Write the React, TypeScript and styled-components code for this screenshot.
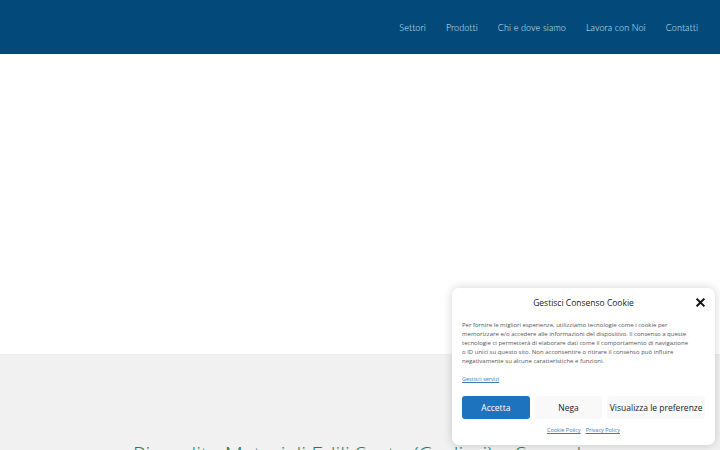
import React from 'react';
import styled, { createGlobalStyle } from 'styled-components';

const GlobalStyle = createGlobalStyle`
  html, body {
    margin: 0;
    padding: 0;
    background: #ffffff;
    font-family: 'Open Sans', 'Liberation Sans', sans-serif;
    overflow: hidden;
  }
`;

const Page = styled.div`
  width: 720px;
  height: 450px;
  position: relative;
  overflow: hidden;
`;

const Header = styled.header`
  height: 53px;
  background: #034a7b;
  border-bottom: 1px solid #0d4266;
  display: flex;
  align-items: center;
  justify-content: flex-end;
  padding-right: 22px;
`;

const Nav = styled.nav`
  display: flex;
  gap: 20px;
  padding-top: 1px;
`;

const NavLink = styled.a`
  color: #dde8f1;
  font-family: Lato, 'Open Sans', sans-serif;
  font-size: 9px;
  font-weight: 300;
  letter-spacing: 0.1px;
  text-decoration: none;
`;

const Hero = styled.section`
  height: 300px;
  background: #ffffff;
  border-bottom: 1px solid #ececec;
`;

const Intro = styled.section`
  background: #f1f1f1;
  padding-top: 85px;
  padding-left: 2px;
  height: 200px;
  text-align: center;
`;

const Title = styled.h1`
  margin: 0;
  font-weight: 300;
  font-size: 21px;
  color: #227b60;
`;

const Banner = styled.div`
  position: absolute;
  left: 452px;
  top: 288px;
  width: 263px;
  height: 157px;
  box-sizing: border-box;
  background: #ffffff;
  border-radius: 7px;
  box-shadow: 0 0 10px rgba(0, 0, 0, 0.18);
  padding: 8px 10px 0 10px;
  display: flex;
  flex-direction: column;
`;

const BannerHead = styled.div`
  display: flex;
  align-items: center;
  justify-content: center;
  position: relative;
  height: 12px;
`;

const BannerTitle = styled.div`
  font-size: 8.5px;
  color: #222;
`;

const Close = styled.span`
  position: absolute;
  right: 0;
  top: 0;
  display: flex;
  align-items: center;
  height: 12px;
`;

const Message = styled.div`
  margin-top: 13px;
  font-size: 6px;
  line-height: 9px;
  color: #555;
  span {
    display: block;
    white-space: nowrap;
  }
`;

const ManageLink = styled.a`
  margin-top: 9px;
  font-size: 5.5px;
  color: #3a7db3;
  text-decoration: underline;
`;

const Buttons = styled.div`
  display: flex;
  gap: 5px;
  margin-top: 13px;
`;

const Button = styled.button<{ $primary?: boolean; $w: number }>`
  width: ${(p) => p.$w}px;
  height: 23px;
  border: none;
  border-radius: 3px;
  font-family: inherit;
  font-size: 8.5px;
  padding: 0;
  background: ${(p) => (p.$primary ? '#1e73be' : '#f9f9f9')};
  color: ${(p) => (p.$primary ? '#ffffff' : '#222')};
`;

const Links = styled.div`
  display: flex;
  justify-content: center;
  gap: 5px;
  margin-top: 7px;
  a {
    font-size: 5.5px;
    color: #3a7db3;
    text-decoration: underline;
  }
`;

const App: React.FC = () => {
  const menu = ['Settori', 'Prodotti', 'Chi e dove siamo', 'Lavora con Noi', 'Contatti'];
  return (
    <Page>
      <GlobalStyle />
      <Header>
        <Nav>
          {menu.map((m) => (
            <NavLink key={m} href="#">
              {m}
            </NavLink>
          ))}
        </Nav>
      </Header>
      <Hero />
      <Intro>
        <Title>Rivendita Materiali Edili Sestu (Cagliari) e Sarroch</Title>
      </Intro>

      <Banner>
        <BannerHead>
          <BannerTitle>Gestisci Consenso Cookie</BannerTitle>
          <Close>
            <svg width="9" height="9" viewBox="0 0 10 10">
              <path d="M1.5 1.5 L8.5 8.5 M8.5 1.5 L1.5 8.5" stroke="#111" strokeWidth="2.2" strokeLinecap="square" />
            </svg>
          </Close>
        </BannerHead>
        <Message>
          <span>Per fornire le migliori esperienze, utilizziamo tecnologie come i cookie per</span>
          <span>memorizzare e/o accedere alle informazioni del dispositivo. Il consenso a queste</span>
          <span>tecnologie ci permetterà di elaborare dati come il comportamento di navigazione</span>
          <span>o ID unici su questo sito. Non acconsentire o ritirare il consenso può influire</span>
          <span>negativamente su alcune caratteristiche e funzioni.</span>
        </Message>
        <ManageLink href="#">Gestisci servizi</ManageLink>
        <Buttons>
          <Button $primary $w={68}>Accetta</Button>
          <Button $w={68}>Nega</Button>
          <Button $w={98}>Visualizza le preferenze</Button>
        </Buttons>
        <Links>
          <a href="#">Cookie Policy</a>
          <a href="#">Privacy Policy</a>
        </Links>
      </Banner>
    </Page>
  );
};

export default App;
